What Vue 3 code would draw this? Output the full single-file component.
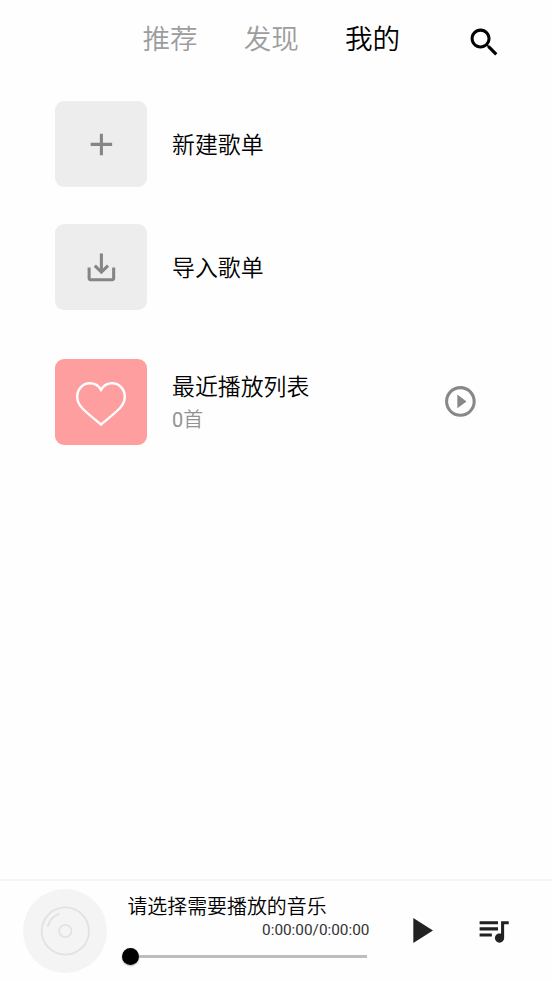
<script setup>
import { ref } from 'vue'

const tabs = ['推荐', '发现', '我的']
const active = ref(2)
const actions = [
  { label: '新建歌单', path: 'M19 13h-6v6h-2v-6H5v-2h6V5h2v6h6v2z' },
  {
    label: '导入歌单',
    path: 'M19 12v7H5v-7H3v7c0 1.1.9 2 2 2h14c1.1 0 2-.9 2-2v-7h-2zm-6 .67l2.59-2.58L17 11.5l-5 5-5-5 1.41-1.41L11 12.67V3h2v9.67z',
  },
]
</script>

<template>
  <div class="page">
    <header class="top">
      <nav class="tabs">
        <span
          v-for="(t, i) in tabs"
          :key="t"
          class="tab"
          :class="{ active: i === active }"
          @click="active = i"
        >{{ t }}</span>
      </nav>
      <svg class="icon search" viewBox="0 0 24 24">
        <path d="M15.5 14h-.79l-.28-.27C15.41 12.59 16 11.11 16 9.5 16 5.91 13.09 3 9.5 3S3 5.91 3 9.5 5.91 16 9.5 16c1.61 0 3.09-.59 4.23-1.57l.27.28v.79l5 4.99L20.49 19l-4.99-5zm-6 0C7.01 14 5 11.99 5 9.5S7.01 5 9.5 5 14 7.01 14 9.5 11.99 14 9.5 14z" />
      </svg>
    </header>

    <main class="list">
      <div v-for="a in actions" :key="a.label" class="row">
        <div class="thumb">
          <svg class="icon" viewBox="0 0 24 24"><path :d="a.path" /></svg>
        </div>
        <div class="title label">{{ a.label }}</div>
      </div>
      <div class="row recent">
        <div class="thumb pink">
          <svg class="heart" viewBox="0 0 52 46">
            <path d="M26 43.5C20 38.5 13 33 7.5 27.5C3.5 23.5 2.2 20 2.2 15.8C2.2 8 7.8 2.2 14.8 2.2C19.6 2.2 23.8 4.8 26 8.8C28.2 4.8 32.4 2.2 37.2 2.2C44.2 2.2 49.8 8 49.8 15.8C49.8 20 48.5 23.5 44.5 27.5C39 33 32 38.5 26 43.5Z" />
          </svg>
        </div>
        <div class="info">
          <div class="title">最近播放列表</div>
          <div class="count"><span class="num">0</span>首</div>
        </div>
        <svg class="icon play-circle" viewBox="0 0 24 24">
          <path d="M10 16.5l6-4.5-6-4.5v9zM12 2C6.48 2 2 6.48 2 12s4.48 10 10 10 10-4.48 10-10S17.52 2 12 2zm0 18c-4.41 0-8-3.59-8-8s3.59-8 8-8 8 3.59 8 8-3.59 8-8 8z" />
        </svg>
      </div>
    </main>

    <footer class="player">
      <div class="cover">
        <svg viewBox="0 0 84 84">
          <circle cx="42.3" cy="42" r="23.6" />
          <circle cx="42.3" cy="42" r="6.2" />
          <path d="M24.8 37.2A18.2 18.2 0 0 1 36 24.9" />
        </svg>
      </div>
      <div class="center">
        <div class="song">请选择需要播放的音乐</div>
        <div class="time">0:00:00/0:00:00</div>
        <div class="slider"><span class="knob"></span><span class="track"></span></div>
      </div>
      <svg class="icon play" viewBox="0 0 24 24"><path d="M8 5v14l11-7z" /></svg>
      <svg class="icon queue" viewBox="0 0 24 24">
        <path d="M15 6H3v2h12V6zm0 4H3v2h12v-2zM3 16h8v-2H3v2zM17 6v8.18c-.31-.11-.65-.18-1-.18-1.66 0-3 1.34-3 3s1.34 3 3 3 3-1.34 3-3V8h3V6h-5z" />
      </svg>
    </footer>
  </div>
</template>

<style>
body { background: #fff; }
</style>

<style scoped>
.page {
  height: 981px;
  display: flex;
  flex-direction: column;
  overflow: hidden;
  background: #fefefe;
  color: #000;
  font-family: Roboto, "Noto Sans CJK SC", sans-serif;
  font-weight: 350;
}
.icon { width: 36.8px; height: 36.8px; flex: none; display: block; }
.top {
  height: 77px;
  display: flex;
  align-items: flex-start;
  padding-left: 142.5px;
  box-sizing: border-box;
}
.tabs { display: flex; gap: 46px; padding-top: 20px; width: 323.5px; }
.tab { font-size: 27.6px; line-height: 40px; color: #9d9d9d; white-space: nowrap; }
.tab.active { color: #000; }
.search { margin-top: 24px; }
.list { flex: 1; padding: 24px 73.6px 0 55px; }
.row { display: flex; align-items: center; height: 86px; margin-bottom: 37px; }
.recent { margin-top: 49px; }
.thumb {
  width: 92px;
  height: 86px;
  border-radius: 9px;
  background: #ededed;
  display: flex;
  align-items: center;
  justify-content: center;
  fill: #858585;
  margin-right: 25px;
  flex: none;
}
.pink { background: #ff9e9e; }
.heart { width: 52px; height: 46px; fill: none; stroke: #fff; stroke-width: 2.4; margin-top: 3px; }
.title { font-size: 22.9px; line-height: 34px; }
.label { padding-top: 4px; }
.info { flex: 1; padding-top: 3px; }
.count { font-size: 19.93px; line-height: 31px; color: #929292; }
.num { font-weight: 400; }
.play-circle { fill: #888; margin-bottom: 1px; }
.player {
  height: 102px;
  box-sizing: border-box;
  border-top: 2px solid #f5f5f5;
  display: flex;
  align-items: flex-start;
  padding-left: 23px;
}
.cover { width: 84px; height: 84px; border-radius: 50%; background: #f4f4f4; margin-top: 7.5px; }
.cover svg { display: block; fill: none; stroke: #e2e2e2; stroke-width: 1.8; stroke-linecap: round; }
.center { width: 247px; margin-left: 15.4px; padding-top: 12px; }
.song { font-size: 19.93px; line-height: 30px; padding-left: 5px; white-space: nowrap; }
.time { font-size: 15.33px; font-weight: 400; line-height: 18px; margin-top: -2px; text-align: right; color: #333; }
.slider { display: flex; align-items: center; height: 18px; margin-top: 8px; }
.knob { width: 17px; height: 17px; border-radius: 50%; background: #000; box-shadow: 0 1px 2px rgba(0, 0, 0, .3); }
.track { width: 228px; height: 3px; background: #bdbdbd; }
.play { width: 42.9px; height: 42.9px; fill: #222; margin: 28px 0 0 29.6px; }
.queue { fill: #222; margin: 31px 0 0 33.2px; }
</style>
